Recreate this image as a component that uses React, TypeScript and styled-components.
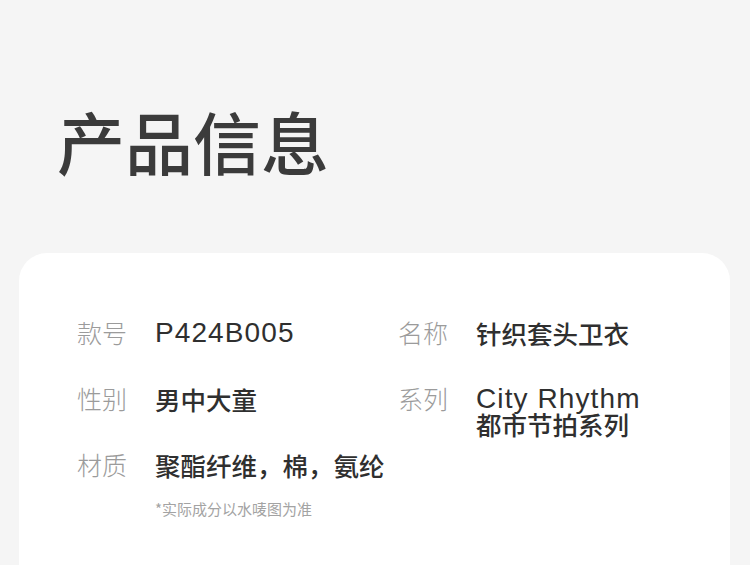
import * as React from "react";
import { FC } from "react";
import styled, { createGlobalStyle } from "styled-components";

const cjk = `"Noto Sans CJK SC", "Noto Sans", sans-serif`;
const latin = `"Liberation Sans", Arial, "Noto Sans CJK SC", sans-serif`;

type Item = {
  label: string;
  lines: { text: string; latin?: boolean }[];
  note?: string;
};

const leftItems: Item[] = [
  { label: "款号", lines: [{ text: "P424B005", latin: true }] },
  { label: "性别", lines: [{ text: "男中大童" }] },
  {
    label: "材质",
    lines: [{ text: "聚酯纤维，棉，氨纶" }],
    note: "*实际成分以水唛图为准",
  },
];

const rightItems: Item[] = [
  { label: "名称", lines: [{ text: "针织套头卫衣" }] },
  {
    label: "系列",
    lines: [{ text: "City Rhythm", latin: true }, { text: "都市节拍系列" }],
  },
];

const App: FC = () => {
  const renderItem = (item: Item) => (
    <Row key={item.label}>
      <Label>{item.label}</Label>
      <ValueBlock>
        {item.lines.map((line) => (
          <Value key={line.text} $latin={line.latin}>
            {line.text}
          </Value>
        ))}
        {item.note && <Note>{item.note}</Note>}
      </ValueBlock>
    </Row>
  );

  return (
    <>
      <GlobalStyle />
      <Page>
        <Title>产品信息</Title>
        <Card>
          <Column>{leftItems.map(renderItem)}</Column>
          <Column>{rightItems.map(renderItem)}</Column>
        </Card>
      </Page>
    </>
  );
};

const GlobalStyle = createGlobalStyle`
  html, body {
    margin: 0;
    padding: 0;
    background: #f5f5f5;
    font-family: ${cjk};
  }
`;

const Page = styled.div`
  width: 750px;
  height: 565px;
  overflow: hidden;
  background: #f5f5f5;
  padding-top: 107px;
  box-sizing: border-box;
`;

const Title = styled.h1`
  margin: 0 0 0 57px;
  font-family: ${cjk};
  font-size: 68px;
  line-height: 68px;
  font-weight: 500;
  color: #3b3b3b;
`;

const Card = styled.div`
  margin: 78px 20px 0 19px;
  background: #ffffff;
  border-radius: 28px;
  padding: 67px 0 90px 58px;
  display: grid;
  grid-template-columns: 321px 1fr;
`;

const Column = styled.div`
  display: flex;
  flex-direction: column;
  gap: 41px;
`;

const Row = styled.div`
  display: flex;
  align-items: flex-start;
`;

const Label = styled.div`
  width: 78px;
  flex-shrink: 0;
  font-family: ${cjk};
  font-size: 25px;
  line-height: 25px;
  color: #9b9b9b;
  font-weight: 300;
`;

const ValueBlock = styled.div`
  display: flex;
  flex-direction: column;
`;

const Value = styled.div<{ $latin?: boolean }>`
  font-family: ${(p) => (p.$latin ? latin : cjk)};
  font-size: ${(p) => (p.$latin ? "28px" : "25.5px")};
  letter-spacing: ${(p) => (p.$latin ? "1.1px" : "0")};
  line-height: 25px;
  color: #2f2f2f;
  font-weight: 500;
  white-space: nowrap;
`;

const Note = styled.div`
  margin-top: 24px;
  font-family: ${cjk};
  font-size: 15px;
  line-height: 16px;
  color: #a3a3a3;
  white-space: nowrap;
`;

export default App;
